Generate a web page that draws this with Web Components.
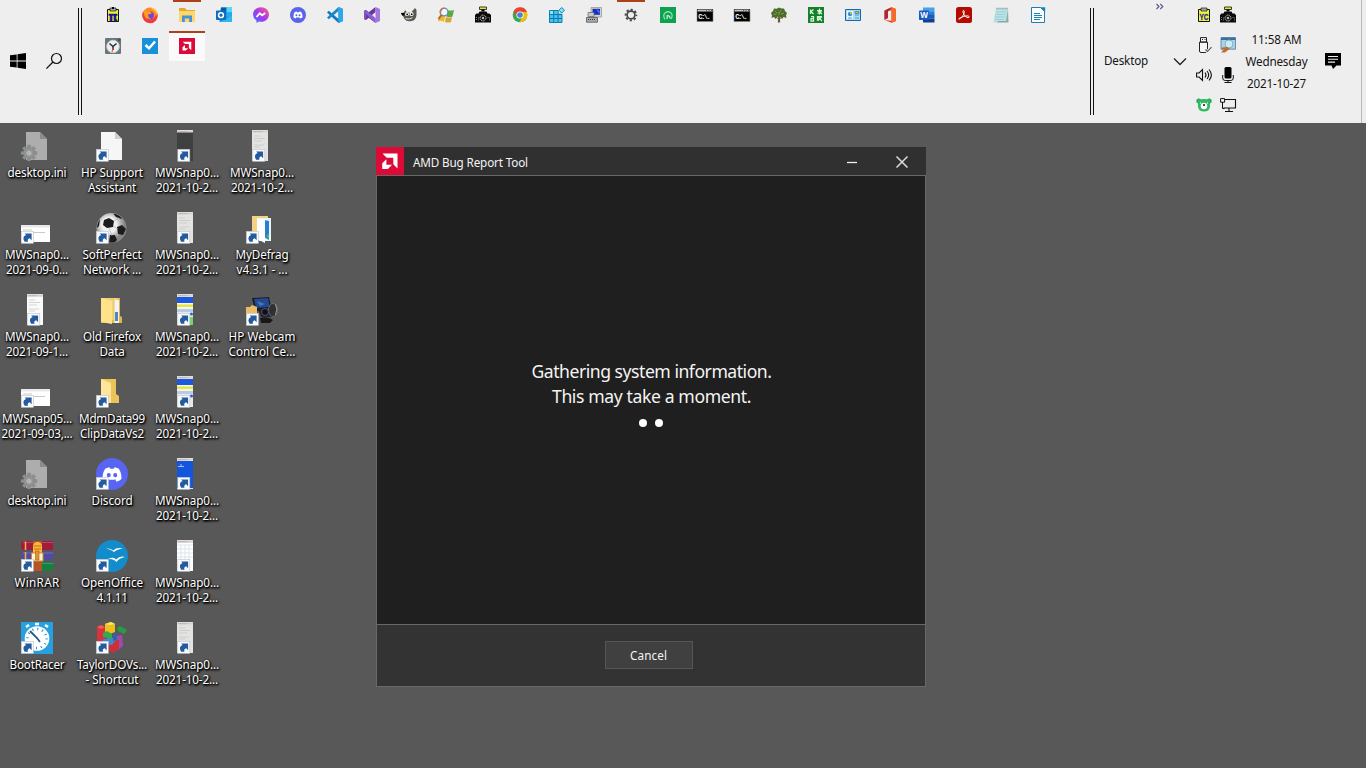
<!DOCTYPE html>
<html lang="en">
<head>
<meta charset="utf-8">
<title>Desktop</title>
<style>
html,body{margin:0;height:100%;overflow:hidden;background:#585858}
body{font-family:"Noto Sans","Open Sans",sans-serif}
</style>
</head>
<body>
<desk-shell></desk-shell>
<script>
/* Icon artwork: 16-unit icons for the bar, 32-unit icons for the desktop. */
const doc = (fill, edge) => `<path d="M5 1h14l7 7v21H5z" fill="${fill}"/><path d="M19 1v7h7z" fill="${edge}"/>`;
const arrow = (x = 0) => `<rect x="${x + .3}" y="18.3" width="12" height="12" fill="#fbfbfb" stroke="#b9c3cd" stroke-width=".6"/><path d="M${x + 3.6} 28.800q-3-5 1.500-6.700l-1.500-1.700h7v6.800l-1.900-1.900q-2.700.8-1.700 3.500z" fill="#245a9e"/>`;
const thumb = inner => `<rect x="6" y="-1" width="16" height="31" fill="#e9e9e9"/>${inner}<path d="M6 -.5h16v2H6z" fill="#d8cfd0"/><path d="M7.500.7h9" stroke="#9e9797" stroke-width=".8" stroke-dasharray="1 .7"/>${arrow(6.500)}`;
const lines = `<path d="M8 5h6M8 7.500h11M8 10h8M8 14h10M8 16h6" stroke="#c4c4c4" stroke-width=".7"/>`;
const wide = `<rect y="12" width="29" height="17" fill="#fff"/><path d="M0 12h29v2.500H0z" fill="#e8e8e8"/><path d="M2 17h9M2 19.500h22" stroke="#bbb" stroke-width=".8"/>${arrow()}`;
const stripes = `<path d="M6 2h16v6H6z" fill="#1c58dd"/><path d="M6 8h16v2H6zM6 12h16v5H6z" fill="#f5f5ed"/><path d="M6 9.500h16v2.300H6z" fill="#e9e32c"/><path d="M6 14h16v3H6z" fill="#b8cce6"/><circle cx="20.500" cy="19" r="1.500" fill="#2862d8"/>`;
const teeth = [0, 45, 90, 135].map(a => `<path d="M6.400 14h3.200v16H6.400z" transform="rotate(${a} 8 22)"/>`).join('');
const ini = doc('#adadad', '#8c8c8c') + `<g fill="#8f9293" stroke="#777" stroke-width=".3">${teeth}<circle cx="8" cy="22" r="5.800"/></g><circle cx="8" cy="22" r="2.600" fill="#b4b4b4"/>`;
const folder = `<path d="M5 2h15v15l3 2v7H5z" fill="#eac458"/><path d="M5 2l10 4v20l-10-1z" fill="#ffe69a"/>`;
const face = (s, x, y, c) => `<path transform="translate(${x} ${y}) scale(${s})" d="M3.100 1Q5 .1 6.100 0l.6 1.200q1.300-.2 2.600 0L9.900 0q1.200.1 3 1 2.400 3.500 2.100 7.700-1.600 1.500-3.700 2l-.8-1.400.9-.6q-3.400 1.300-6.800 0l.9.6-.8 1.400q-2.100-.5-3.700-2Q.7 4.500 3.100 1zM5.600 4.300a1.500 1.600 0 100 3.200 1.500 1.600 0 000-3.200zm4.800 0a1.500 1.600 0 100 3.200 1.500 1.600 0 000-3.200z" fill="${c}" fill-rule="evenodd"/>`;
const amd = `<rect width="28" height="28" fill="#dc0a37"/><path d="M6.500 6.500h15v15l-4.200-4.200v-6.600h-6.600z" fill="#fff"/><path d="M10.400 12.200v5.600H16l-4.100 4.100H6.200v-5.600z" fill="#fff"/>`;
const cmd = `<rect y="2" width="16" height="12.500" fill="#000"/><path d="M.5 2.500h15v2H.5z" fill="#c6c6c6"/><path d="M9 3.500h1m1.500 0h1m1.500 0h1" stroke="#666"/><text x="1.300" y="11.700" font-family="Liberation Mono,monospace" font-weight="700" font-size="7" fill="#fff" textLength="12.500">C:\\.</text><path d="M0 2.500v12h16v-12" fill="none" stroke="#888" stroke-width=".6"/>`;
const camera = `<path d="M4.500 0h7v2.500h-7z" fill="#e2e832" stroke="#111" stroke-width=".8"/><path d="M6.500 2.500h3v2h-3z"/><path d="M4.500 4.500h7l1 2h2L16 8v7.500H0V8l1.500-1.500h2z" fill="#0a0a0a"/><circle cx="8" cy="11" r="3" fill="#222" stroke="#ddd" stroke-width=".8" stroke-dasharray="1.200 .6"/><circle cx="8" cy="11" r="1" fill="#e5e5e5"/><path d="M1.500 10v4M3.500 10.500v3M12.500 10.500h2v4" fill="none" stroke="#a99" stroke-width=".8" stroke-dasharray="1 1"/>`;
const clip = t => `<path d="M2.500 2.500h11v12h-11z" fill="#f4f431" stroke="#111"/><path d="M5 1h6v3H5z" fill="#aaa" stroke="#111" stroke-width=".7"/>${t}`;
const ART = {
pi: clip(`<path d="M7 0h2v2H7z"/><text x="8" y="13.500" text-anchor="middle" font-family="DejaVu Sans,sans-serif" font-weight="700" font-size="12" stroke="#1515a0" stroke-width=".4" fill="#1515a0">π</text>`),
yc: clip(`<text x="8" y="13" text-anchor="middle" font-family="Liberation Sans,sans-serif" font-weight="700" font-size="9" textLength="9" lengthAdjust="spacingAndGlyphs" stroke="#2424a8" stroke-width=".3" fill="#2424a8">YC</text>`),
firefox: `<circle cx="8" cy="8.300" r="7.700" fill="#ff8a24"/><path d="M1 4Q-1.500 11 4 15q6 3 10-1.500Q17 9 14.500 4q0 6-4 8-6 2-8-3z" fill="#f5393f"/><path d="M8.500.2q1 2 3.500 3 3 2.500 2.500 6Q17 4 12 1.500 10 1 8.500.2z" fill="#ffcf3b"/><circle cx="8" cy="8.500" r="3.900" fill="#7545cd"/><path d="M2 3l2 1.500h4l2 2-4 1q0 3 3 4-5 1-6-3z" fill="#ff9e20"/>`,
explorer: `<path d="M0 2.500V1h6l1.500 2H16v4H0z" fill="#e5a92b"/><path d="M0 4h16v11H0z" fill="#ffd667"/><path d="M3 15V8.500h10V15h-2.800v-3.500H5.800V15z" fill="#4593d8"/>`,
outlook: `<path d="M5 .5h11V15H3.500V8z" fill="#1490df"/><path d="M5 .5h5.500v5H5z" fill="#0358a7"/><path d="M10.500.5H16v5h-5.500z" fill="#50d9ff"/><path d="M10.500 5.500H16v4.800h-5.500z" fill="#28a8ea"/><path d="M3.500 15L16 8.500V15z" fill="#31b4ef"/><rect y="3.500" width="10" height="9.500" rx=".7" fill="#0f6cbd"/><circle cx="5" cy="8.200" r="2.400" fill="none" stroke="#fff" stroke-width="1.500"/>`,
messenger: `<defs><linearGradient id="m" x1="0" y1="1" x2="1" y2="0"><stop stop-color="#3178ff"/><stop offset=".5" stop-color="#aa36f0"/><stop offset="1" stop-color="#ff6670"/></linearGradient></defs><path d="M8 .3C12.700.3 16 3.500 16 7.500s-3.300 7.300-8 7.300l-2-.2L3.500 16v-2.600Q0 11 0 7.500C0 3.500 3.300.3 8 .3z" fill="url(#m)"/><path d="M3.500 10l3.200-3.700 2.500 2 3-2.200" fill="none" stroke="#fff" stroke-width="1.800"/>`,
discord: `<circle cx="8" cy="8" r="8" fill="#5865e8"/>` + face(.66, 2.700, 4.400, '#fff'),
vscode: `<path d="M11.500 0L16 2v12l-4.500 2L0 5.500 1.800 3.800 11.500 12z" fill="#1278bd"/><path d="M11.500 0L0 10.500l1.800 1.700L11.500 4z" fill="#1688cd"/><path d="M11.500 0L16 2v12l-4.500 2z" fill="#2ba7eb"/>`,
vs: `<path d="M11.500 0v5L4.500 11 2 13l-2-1V4l2-1 2.500 2 7 6.500V16L4 10.300 2.500 9V7L4 5.700z" fill="#68399d"/><path d="M2 3l9.500 8.500V16L0 5V4z" fill="#8a60cf"/><path d="M0 4l2-1v10l-2-1z" fill="#8053bd"/><path d="M11.500 0L16 2v12l-4.500 2z" fill="#a576dd"/>`,
gimp: `<path d="M0 6l3-.5L4 3l2 2.500h4L14 1l1.500 2v5q-.5 5.500-5 6-5 1-7-2L2 9z" fill="#5b5850"/><circle cx="6" cy="7.200" r="1.900" fill="#fff"/><circle cx="10.500" cy="7" r="2.100" fill="#fff"/><circle cx="6.200" cy="7.400" r=".9"/><circle cx="10.700" cy="7.200" r=".9"/><path d="M4.500 11.700q4 1 7-1" stroke="#ddd" fill="none"/><path d="M0 6h3.500v2.500H1z"/>`,
winmag: `<path d="M1 9Q4 7 7 9l-1 6q-3-2-6-.5z" fill="#f2b632"/><path d="M8 10q3 1 6 0l-1 5q-3 1-6 0z" fill="#d7a633"/><path d="M9 3q3 1 7 0l-1.500 6.500q-3 1-6 0z" fill="#55ad44"/><circle cx="6" cy="5" r="3.900" fill="#e9faff" stroke="#6b87a0" stroke-width="1.200"/><path d="M6 1.200q-3.500 1-3.500 4.500" fill="none" stroke="#e96742" stroke-width="1.400"/><path d="M3.500 8L.5 12" stroke="#a96b37" stroke-width="2"/>`,
camera,
chrome: `<circle cx="8" cy="8" r="7.300" fill="#34a853"/><path d="M1.500 4.500A7.300 7.300 0 0115 5H8z" fill="#ea4335"/><path d="M15 5q1.500 5-2.500 8.500-3 2-5 1.500L11 9 8 5z" fill="#fbbc05"/><path d="M1.500 4.500l4 6L8 5z" fill="#ea4335"/><circle cx="8" cy="8" r="3.600" fill="#fff"/><circle cx="8" cy="8" r="2.800" fill="#4285d4"/>`,
regedit: `<path d="M.5 3.500h8.700v3.700H13v8.300H.5z" fill="#45c4f1" stroke="#1380ad"/><path d="M1 4h3.500v3.500H1z" fill="#8ce4ff"/><path d="M4.700 3.500v12M9 7v8M0 7.600h13M0 11.500h13" stroke="#0b77aa"/><path d="M12.700.5l2.800 2.700-2.800 2.800L10 3.200z" fill="#8be4ff" stroke="#1380ad"/>`,
network: `<path d="M5 .5h10.500v9.500H5z" fill="#d3d3ce" stroke="#93938e" stroke-width=".7"/><path d="M6.500 1.800H14v6H6.500z" fill="#1730bc"/><path d="M10 2l3.500 2v3z" fill="#607fff"/><path d="M2 5.500h6v4H2z" fill="#c3ccd2" stroke="#64717a" stroke-width=".8"/><path d="M.5 10.500h11v4.700H.5z" fill="#a8adb1" stroke="#50575c" stroke-width=".8"/><path d="M2 12.500h8" stroke="#333" stroke-dasharray="1 1"/>`,
settings: `<circle cx="8" cy="8" r="3.900" fill="none" stroke="#444" stroke-width="1.700"/><circle cx="8" cy="8" r="5.400" fill="none" stroke="#444" stroke-width="1.800" stroke-dasharray="2.200 2.041" stroke-dashoffset="1.100"/>`,
green: `<path d="M0 0h16v16H0z" fill="#0ba250"/><path d="M5 12.300Q2.500 8.500 5 6q3-2.500 6 0 2.300 2.500 0 6" fill="none" stroke="#8cdcaa" stroke-width="1.300"/><path d="M7 12l.3-3.500 2.200.8.8 2.200" fill="none" stroke="#d3f6df" stroke-width="1.200"/>`,
cmd,
tree: `<path d="M7.200 8h1.600l.4 7.500H6.800z" fill="#6e5d32"/><path d="M8 12L3.500 9.500M8 12l4.500-2.500" stroke="#6e5d32"/><path d="M8 .5l2.500 1L13 1.500 14 4l2 2-1 2.500.5 2.500-3-1-1.500 2-2-2.200L8 10l-1.500-.5L4.500 12 3 10 .5 11 1 8.500 0 6l2-2L3 1.500l2.700.2z" fill="#4d6e2b"/><path d="M4 4l2 2M10 3L8 6M13 6l-3 1M2.500 7.500l3-.5M8 5v3" stroke="#849d45"/>`,
translate: `<path d="M0 0h16v16H0z" fill="#148029"/><path d="M2.500 2.500v4.500M2.500 5l3-2.500M3 4.500L5.500 7M9 3.500h5M11.500 1.500v6M9.500 6.500l4-2M10 4l4 3M3 9.500h2.500V14H3v-2.300h2.500M9.500 9.500l4.500 4.500M9.500 13.800V9.500H14M14 9.500l-4.500 4.300" fill="none" stroke="#d7f4d8" stroke-width="1.250"/>`,
control: `<path d="M.5 2.500h15v11H.5z" fill="#acdcf4" stroke="#1769aa"/><path d="M2 4h6v8H2z" fill="#e8f7ff"/><circle cx="5" cy="7" r="2.200" fill="#3791c9"/><path d="M5 7V4.800A2.200 2.200 0 017.200 7z" fill="#f2b42b"/><path d="M10 4.500h4v2h-4zM10 8h4M3 11h4M10 11h4" fill="#e5b344" stroke="#3187b9" stroke-width=".8"/>`,
office: `<path d="M9.500.2L14 2v12l-4.500 1.800L2.500 13l7 .7V3.300L6 4.300V11l-3.500 1.700v-9z" fill="#e3441f"/><path d="M9.500.2L2.500 3.500v9.200L6 11V4.300z" fill="#a92b38"/><path d="M9.500.2L14 2v12l-4.500 1.800z" fill="#f46a2a"/>`,
word: `<path d="M4 .5h11.500V4.300H4z" fill="#41a5ee"/><path d="M4 4.300h11.500V8H4z" fill="#2b7cd3"/><path d="M4 8h11.500v3.700H4z" fill="#185abd"/><path d="M4 11.700h11.500v3.800H4z" fill="#103f91"/><rect y="3.500" width="10" height="9.500" rx=".8" fill="#185abd"/><text x="5" y="11" text-anchor="middle" font-family="Open Sans,sans-serif" font-size="8" font-weight="700" fill="#fff">W</text>`,
acrobat: `<rect width="16" height="16" rx="2.500" fill="#b30b00"/><path d="M3 12.200c3-1 6.500-7 5-8.500-1.200-.8-1.700 1 .2 4.200 1.800 2.900 5.200 3.500 4.900 1.700-.3-1.400-5-.6-8.800 1.200-1.700.8-2 1.500-1.300 1.400z" fill="none" stroke="#fff" stroke-width="1"/>`,
notepad: `<path d="M3 2h12l-1.800 13.500H.5z" fill="#b5dde0"/><path d="M15 2l.5 13.500H4z" fill="#8ba9aa"/><path d="M3 2h12l-2 12H.8z" fill="#b9e3e6"/><path d="M3 5h10M2.700 7.500h10M2.300 10h10M2 12.500h9" stroke="#8cc2c7" stroke-width=".6"/><path d="M3.500 1.500h11" stroke="#6d8588" stroke-width="1.600" stroke-dasharray="1 1"/>`,
writer: `<path d="M1.500.5h9l4 4v11h-13z" fill="#fff" stroke="#197eb0"/><path d="M10 .2h5.200v5z" fill="#1583b8"/><path d="M4 6.500h6M4 8.500h8M4 10.500h8M4 12.500h6" stroke="#1687bd"/>`,
clock: `<rect width="16" height="16" rx="1" fill="#69767c"/><circle cx="8" cy="8.500" r="6.300" fill="#eee" stroke="#c6cbce"/><path d="M4.500 5.500L8 8.500l3.500-3M8 8.500V12" fill="none" stroke="#252f36" stroke-width="1.500"/><path d="M8 10l-1 4" stroke="#e84735"/><circle cx="14" cy="2" r="1.600" fill="#49575e"/>`,
check: `<path d="M0 0h16v16H0z" fill="#1991da"/><path d="M3.500 7l3.500 3.300L13 3.500" fill="none" stroke="#fff" stroke-width="2.500"/>`,
amd16: `<g transform="scale(.5714)">${amd}</g>`,
amd,
start: `<path d="M0 2.300L6.700 1.400v6.200H0zM7.500 1.200L16 0v7.600H7.500zM0 8.400h6.700v6.200L0 13.700zM7.500 8.400H16V16l-8.500-1.200z"/>`,
search: `<circle cx="10.500" cy="5.500" r="5" fill="none" stroke="#111" stroke-width="1.200"/><path d="M7 9L.4 15.600" stroke="#111" stroke-width="1.300"/>`,
usb: `<path d="M4.500.6h6v4.500h-6zM3.500 5.100h8V14q0 1.500-1.500 1.500H5q-1.500 0-1.500-1.500z" fill="#f6f6f6" stroke="#222"/><path d="M6 2.500h1M8.500 2.500h1" stroke="#222"/><path d="M9 12.500l2.200 2.200L15.500 10" fill="none" stroke="#eee" stroke-width="3"/><path d="M9.500 12.500l2 2 4-4.300" fill="none" stroke="#555" stroke-width="1.100"/>`,
winfind: `<path d="M1 .7h14.500v11.500H1z" fill="#a9d2eb" stroke="#587890" stroke-width=".8"/><path d="M1 .5h14.500v2.500H1z" fill="#396fa0"/><circle cx="9" cy="7" r="4" fill="#c7edef" stroke="#8caebd"/><path d="M7 10l-5 .5-1 2 3-.5-3 3.500h4l5-4z" fill="#b86e3d"/>`,
volume: `<path d="M.6 6h2.500L6.500 2.500v11L3.100 10H.6zM9 5.500q2 2.500 0 5M11 4q3.400 4 0 8M13 2.500q4.800 5.500 0 11" fill="none" stroke="#111" stroke-width="1.100"/>`,
mic: `<rect x="4.500" y="0" width="7" height="11.500" rx="1.500"/><path d="M2.700 8v3q0 2.500 2.500 2.500h5.600q2.500 0 2.500-2.500V8M8 13v2.500M4.500 15.500h7" fill="none" stroke="#111"/>`,
bear: `<circle cx="2.800" cy="4" r="2.500" fill="#25a95a"/><circle cx="13.200" cy="4" r="2.500" fill="#25a95a"/><path d="M2 3q6-2 12 0v7q-1 4.500-6 4.500T2 10z" fill="#30b863"/><circle cx="8" cy="9" r="3.300" fill="#fff"/><path d="M7.300 7h1.400v2H7.300z"/><path d="M4 6h1M11 6h1" stroke="#fff"/>`,
lan: `<path d="M4 2.500h11.500v8.500H3.500M9 11v3.500M5 14.500h8" fill="none" stroke="#111" stroke-width="1.100"/><path d="M.6 1.600h4v3.600h-4z" fill="#fff" stroke="#111"/><path d="M2.500 5v6.500h2" fill="none" stroke="#111"/>`,
chat: `<path d="M0 0h16v12.500h-4.500L8 16l-1.500-3.500H0z"/><path d="M3 3.500h10M3 6.300h10M3 9.100h7" stroke="#eee" stroke-width="1.100"/>`,
chevron: `<path d="M2 4.500l6 6 6-6" fill="none" stroke="#222" stroke-width="1.300"/>`,
more: `<path d="M4.500 5l2.500 2.500L4.500 10M8.300 5l2.500 2.500L8.300 10" fill="none" stroke="#55558c" stroke-width="1.100"/>`,
min: `<path d="M3 8.500h10" stroke="#eee" stroke-width="1.300"/>`,
close: `<path d="M2.500 2.500l11 11M13.500 2.500l-11 11" stroke="#ddd" stroke-width="1.500"/>`,
ini, wide,
hpdoc: doc('#f6f6f6', '#cbd0d3') + arrow(),
light: thumb(`<path d="M6 2h16v28H6z" fill="#fafafa"/>` + lines), grey: thumb(`<path d="M6 2h16v28H6z" fill="#e3e3e1"/>` + lines),
dark: thumb(`<path d="M6 1h16v29H6z" fill="#404040"/>`),
stripes: thumb(stripes),
stripesG: thumb(stripes + `<path d="M18 22h4v8h-4z" fill="#75d36d"/>`),
blue: thumb(`<path d="M6 2h16v27H6z" fill="#1356dd"/><path d="M7 7.500h6M9 6h2" stroke="#c7dbfa" stroke-width=".8"/>`),
table: thumb(`<path d="M6 2h16v28H6z" fill="#fff"/><path d="M6 4h16M6 8h16M6 12h16M6 16h16M10 4v15M14 4v15M18 4v15" stroke="#d2dbe5" stroke-width=".7"/>`),
ball: `<defs><radialGradient id="b" cx=".42" cy=".4"><stop offset=".5" stop-color="#f0f0f0"/><stop offset="1" stop-color="#858585"/></radialGradient><clipPath id="bc"><circle cx="15.500" cy="15" r="14.500"/></clipPath></defs><circle cx="15.500" cy="15" r="15" fill="url(#b)"/><g clip-path="url(#bc)" fill="#1c1c1c"><path d="M8 7l5-2 5 3-1 6-6 1-4-3zM21 14l5-2 4 4-3 6-5-1zM14 22l5 0 2 5-4 4h-4zM16-1l7 2 3 5-6-2zM0 9l4-3-1 7-3 3z"/><path d="M17 13l5 3M13 15l3 8M18 8l5-3M27 11l-1-5M22 21l-3 2" stroke="#aaa" stroke-width=".6"/></g>${arrow()}`,
folderFF: `<path d="M5 3h19v18l2 1v6H5z" fill="#dfb84c"/><path d="M5 3h17v22H5z" fill="#f5d272"/><path d="M18 5h5v23h-5z" fill="#f1f4f7"/><path d="M19 17h3v9h-3z" fill="#4788ca"/><path d="M5 3l11 3v23L5 27z" fill="#ffe28a"/><path d="M14 3l4 2v23" fill="none" stroke="#e5c367"/>`,
folder: folder + arrow(),
defrag: `<path d="M6 3h16v24H6z" fill="#f3d283"/><path d="M13 5h12v23H13z" fill="#e9f4fc"/><path d="M18 7l5 1v19l-5-3z" fill="#2680d0"/><path d="M11 5l8 2v23l-8-4z" fill="#fff"/><path d="M20 23l3-2v5z" fill="#59b64e"/>${arrow()}`,
webcam: `<path d="M6 3l17-1 3 14H9z" fill="#171c23"/><path d="M8 4l14-1 2 9-14 1z" fill="#234a91"/><path d="M11 6l8 3-5 2z" fill="#4578bd"/><path d="M12 14h12l4 8H15z" fill="#22232c"/><ellipse cx="27" cy="15" rx="4.500" ry="6.500" fill="#303030" stroke="#777" stroke-width=".8"/><path d="M29.500 9q2.500 5 0 11" fill="none" stroke="#999"/><circle cx="19" cy="17" r="3.500" fill="#111" stroke="#53518a"/><path d="M14 23q8-2 13 2l-3 3H15z" fill="#181818"/><path d="M0 12h4l2-2 5 2v7H0z" fill="#eabd65"/>${arrow()}`,
discord32: `<circle cx="16" cy="15" r="16" fill="#5865f2"/>` + face(1.35, 5.200, 8.200, '#fff') + arrow(),
winrar: `<path d="M1 0h31v9H1q-2-4.500 0-9z" fill="#a31b3b"/><path d="M1 10.500h31v9H1q-2-4.500 0-9z" fill="#514c9f"/><path d="M1 21h31v9H1q-2-4.500 0-9z" fill="#16803f"/><path d="M2 1.500h30M2 12h30M2 22.500h30" stroke="#fff" stroke-opacity=".2" stroke-width="1.200"/><path d="M4.500.5v8.500M4.500 11v8" stroke="#f0b43f" stroke-width="1.500"/><path d="M12 0h9v30h-9z" fill="#b45527"/><path d="M12 6q0-5 4.500-5t4.500 5v6h-9z" fill="#ffb637"/><path d="M13 5h7M13 8h7" stroke="#b96d20"/><path d="M10.500 12H22v8H10.500z" fill="#fff4d2" stroke="#c98c29"/><path d="M14.500 10h3.500v9h-3.500z" fill="#e4932b" stroke="#a85d1e" stroke-width=".6"/>${arrow()}`,
openoffice: `<circle cx="16" cy="15" r="16" fill="#138ccc"/><path d="M10 7.500q5-.5 7 2 4-3.500 10-2-6 .5-9 3.500-3-3-8-3.500zM12 18q6-2.500 8 .5 4-4 9-2.500-6 1-8.500 5-3-3.500-8.500-3z" fill="#fff"/>${arrow()}`,
bootracer: `<path d="M0-1h32v32H0z" fill="#26a0df"/><circle cx="16" cy="15.500" r="12.300" fill="#fff"/><circle cx="16" cy="15.500" r="9.500" fill="none" stroke="#2288c0" stroke-width="2.500" stroke-dasharray="1 3.974"/><path d="M9 8l7 7 3 4" fill="none" stroke="#235c81" stroke-width="1.800"/><path d="M14 1h4M5 4l3-2M27 4l-3-2" stroke="#fff" stroke-width="2.500"/>${arrow()}`,
blocks: `<path d="M1 4l4-2 4 2v14l-3 2-5-2z" fill="#d8333c"/><path d="M1 4l4-2 4 2-4 2z" fill="#f25a5a"/><path d="M9 1l6-2 4 2v8l-5 2-5-2z" fill="#edc11d"/><path d="M9 1l6-2 4 2-5 1z" fill="#ffe461"/><path d="M21 5l3-2 7 4-3 4-6-3z" fill="#279c46"/><path d="M20 13l6-1 1 11-7 5z" fill="#a14aab"/><path d="M13 18l10-1v8l-6 5-5-3z" fill="#cf2f32"/><path d="M6 17l9-3 5 3-4 5-6-1z" fill="#4388cf"/><path d="M17 11l4-1v7l-4 1z" fill="#2c64ac"/><path d="M7 10l4-2 5 3v5l-9-2z" fill="#35a94c"/>${arrow()}`
};

const define = (name, css, render) => customElements.define(name, class extends HTMLElement {
  connectedCallback() {
    if (this.shadowRoot) return;
    const root = this.attachShadow({ mode: 'open' });
    const t = document.createElement('template');
    t.innerHTML = `<style>${css}</style>${render(this)}`;
    root.append(t.content.cloneNode(true));
    if (this.localName === 'fit-text') {
      /* Even out tracking so the line occupies its nominal width. */
      const s = root.querySelector('span'), n = this.getAttribute('text').length;
      s.style.letterSpacing = ((+this.getAttribute('w') + 1 - s.getBoundingClientRect().width) / n) + 'px';
    }
  }
});

define('fit-text', `:host{display:block;white-space:pre;text-align:center}span{display:inline-block;margin:0 -8px}:host([start]) span{margin:0}`,
  e => `<span>${e.getAttribute('text')}</span>`);

define('ui-icon', `:host{display:block;flex:none}svg{display:block;overflow:visible}`, e => {
  const u = e.getAttribute('units') || 16;
  return `<svg width="${u}" height="${u}" viewBox="0 0 ${u} ${u}">${ART[e.getAttribute('name')]}</svg>`;
});

define('task-button', `:host{display:grid;place-items:center;height:30px;position:relative}
:host([open])::before{content:"";position:absolute;top:0;left:4px;right:4px;height:2px;background:#ad4118}
:host([active]){background:#fafafa}:host([active])::before{left:0;right:0}`,
  e => `<ui-icon name="${e.getAttribute('icon')}"></ui-icon>`);

const TASKS = 'pi firefox explorer* outlook messenger discord vscode vs gimp winmag camera chrome regedit network settings* green cmd cmd tree translate control office word acrobat notepad writer clock check amd16!'.split(' ');
define('task-list', `:host{display:grid;grid-template-columns:repeat(26,36px);grid-auto-rows:30px;gap:1px;align-content:start;padding-left:13px}`,
  () => TASKS.map(t => `<task-button icon="${t.replace(/[*!]/, '')}"${/[*!]/.test(t) ? ' open' : ''}${t.endsWith('!') ? ' active' : ''}></task-button>`).join(''));

define('bar-grip', `:host{display:block;width:2px;height:107px;margin-top:8px;border:solid #111;border-width:0 1px}`, () => '');

define('tray-clock', `:host{display:flex;flex-direction:column;align-items:center;width:63px;font-size:11.7px;line-height:22px;color:#151515;margin-top:28px}`,
  () => `<fit-text w="49" text="11:58 AM"></fit-text><fit-text w="61" text="Wednesday"></fit-text><fit-text w="58" text="2021-10-27"></fit-text>`);

define('task-bar', `:host{display:grid;grid-template-columns:78px 4px 1008px 4px 98px 48px 1fr;height:123px;background:#eee}
.start{display:flex;gap:20px;padding:53px 0 0 10px}
.tools{display:grid;grid-template-columns:53px 16px;justify-content:space-between;align-items:center;padding:0 4px 0 10px;position:relative;font-size:11.7px;color:#151515}
.tools fit-text{justify-self:start;margin-bottom:3px}
.more{position:absolute;left:58px;top:-1px}
.tray{display:grid;grid-template-columns:24px 24px;grid-auto-rows:30px;place-items:center}
.end{display:flex;align-items:flex-start;padding-left:5px}
.end ui-icon{margin:53px 0 0 17px}
.edge{height:123px;width:4px;border-left:1px solid #bbb;margin-left:auto}`,
  () => `<div class="start"><ui-icon name="start"></ui-icon><ui-icon name="search"></ui-icon></div><bar-grip></bar-grip><task-list></task-list><bar-grip></bar-grip>
<div class="tools"><fit-text start w="43" text="Desktop"></fit-text><ui-icon name="chevron"></ui-icon><ui-icon class="more" name="more"></ui-icon></div>
<div class="tray">${['yc','camera','usb','winfind','volume','mic','bear','lan'].map(n => `<ui-icon name="${n}"></ui-icon>`).join('')}</div>
<div class="end"><tray-clock></tray-clock><ui-icon name="chat"></ui-icon><div class="edge"></div></div>`);

define('desk-item', `:host{display:block;box-sizing:border-box;width:75px;height:82px;padding-top:8px;font-size:11.7px;line-height:15px;color:#fff;text-shadow:1px 1px 2px #000,1px 1px 2px #000,0 1px 3px #000}
ui-icon{margin-left:21px;height:34px}
fit-text{margin-right:1px}`,
  e => `<ui-icon units="32" name="${e.getAttribute('icon')}"></ui-icon>` + e.getAttribute('label').split('|').map(l => {
    const [t, w] = l.split('~');
    return `<fit-text text="${t}" w="${w}"></fit-text>`;
  }).join(''));

const snap = 'MWSnap0...~63|2021-10-2...~61';
const ITEMS = [
  [['ini','desktop.ini~58'],['wide','MWSnap0...~63|2021-09-0...~61'],['light','MWSnap0...~63|2021-09-1...~61'],['wide','MWSnap05...~69|2021-09-03,...~70'],['ini','desktop.ini~58'],['winrar','WinRAR~44'],['bootracer','BootRacer~54']],
  [['hpdoc','HP Support~61|Assistant~47'],['ball','SoftPerfect~58|Network ...~57'],['folderFF','Old Firefox~57|Data~24'],['folder','MdmData99~65|ClipDataVs2~63'],['discord32','Discord~40'],['openoffice','OpenOffice~61|4.1.11~30'],['blocks','TaylorDOVs...~69|- Shortcut~52']],
  [['dark',snap],['grey',snap],['stripesG',snap],['stripes',snap],['blue',snap],['table',snap],['grey',snap]],
  [['grey',snap],['defrag','MyDefrag~52|v4.3.1 - ...~50'],['webcam','HP Webcam~66|Control Ce...~66']]
];
define('desk-icons', `:host{display:grid;grid-template-columns:repeat(4,75px);align-items:start}`,
  () => ITEMS.map(c => `<div>${c.map(([i, l]) => `<desk-item icon="${i}" label="${l}"></desk-item>`).join('')}</div>`).join(''));

define('push-button', `:host{display:block;box-sizing:border-box;width:88px;height:28px;border:1px solid #565656;background:#404040;color:#f4f4f4;font-size:11.7px;line-height:26px}
fit-text{margin-right:1px}`,
  () => `<fit-text w="36" text="Cancel"></fit-text>`);

define('app-window', `:host{display:grid;grid-template-rows:28px 449px 63px;box-sizing:border-box;width:550px;height:540px;background:#1f1f1f;color:#f4f4f4}
header{display:flex;align-items:center;background:#303030;font-size:11.7px}
header fit-text{margin:1px 0 0 9px}
.buttons{display:flex;gap:34px;margin:1px 16px 0 auto}
main{border:solid #686868;border-width:1px 1px 0;font-size:17.6px;line-height:25px;padding:183px 0 0 1px}
.dots{display:flex;gap:8px;justify-content:center;padding:10px 1px 0 0}
.dots i{width:8px;height:8px;border-radius:50%;background:#fff}
footer{border:1px solid #686868;background:#333;display:flex;justify-content:center;padding:16px 4px 0 0}`,
  () => `<header><ui-icon name="amd" units="28"></ui-icon><fit-text start w="114" text="AMD Bug Report Tool"></fit-text><div class="buttons"><ui-icon name="min"></ui-icon><ui-icon name="close"></ui-icon></div></header>
<main><fit-text w="239" text="Gathering system information."></fit-text><fit-text w="198" text="This may take a moment."></fit-text><div class="dots"><i></i><i></i></div></main>
<footer><push-button></push-button></footer>`);

define('desk-shell', `:host{display:grid;grid-template-rows:123px 645px;width:1366px;height:768px;background:#585858}
.area{position:relative}app-window{position:absolute;left:376px;top:24px}`,
  () => `<task-bar></task-bar><div class="area"><desk-icons></desk-icons><app-window></app-window></div>`);
</script>
</body>
</html>
